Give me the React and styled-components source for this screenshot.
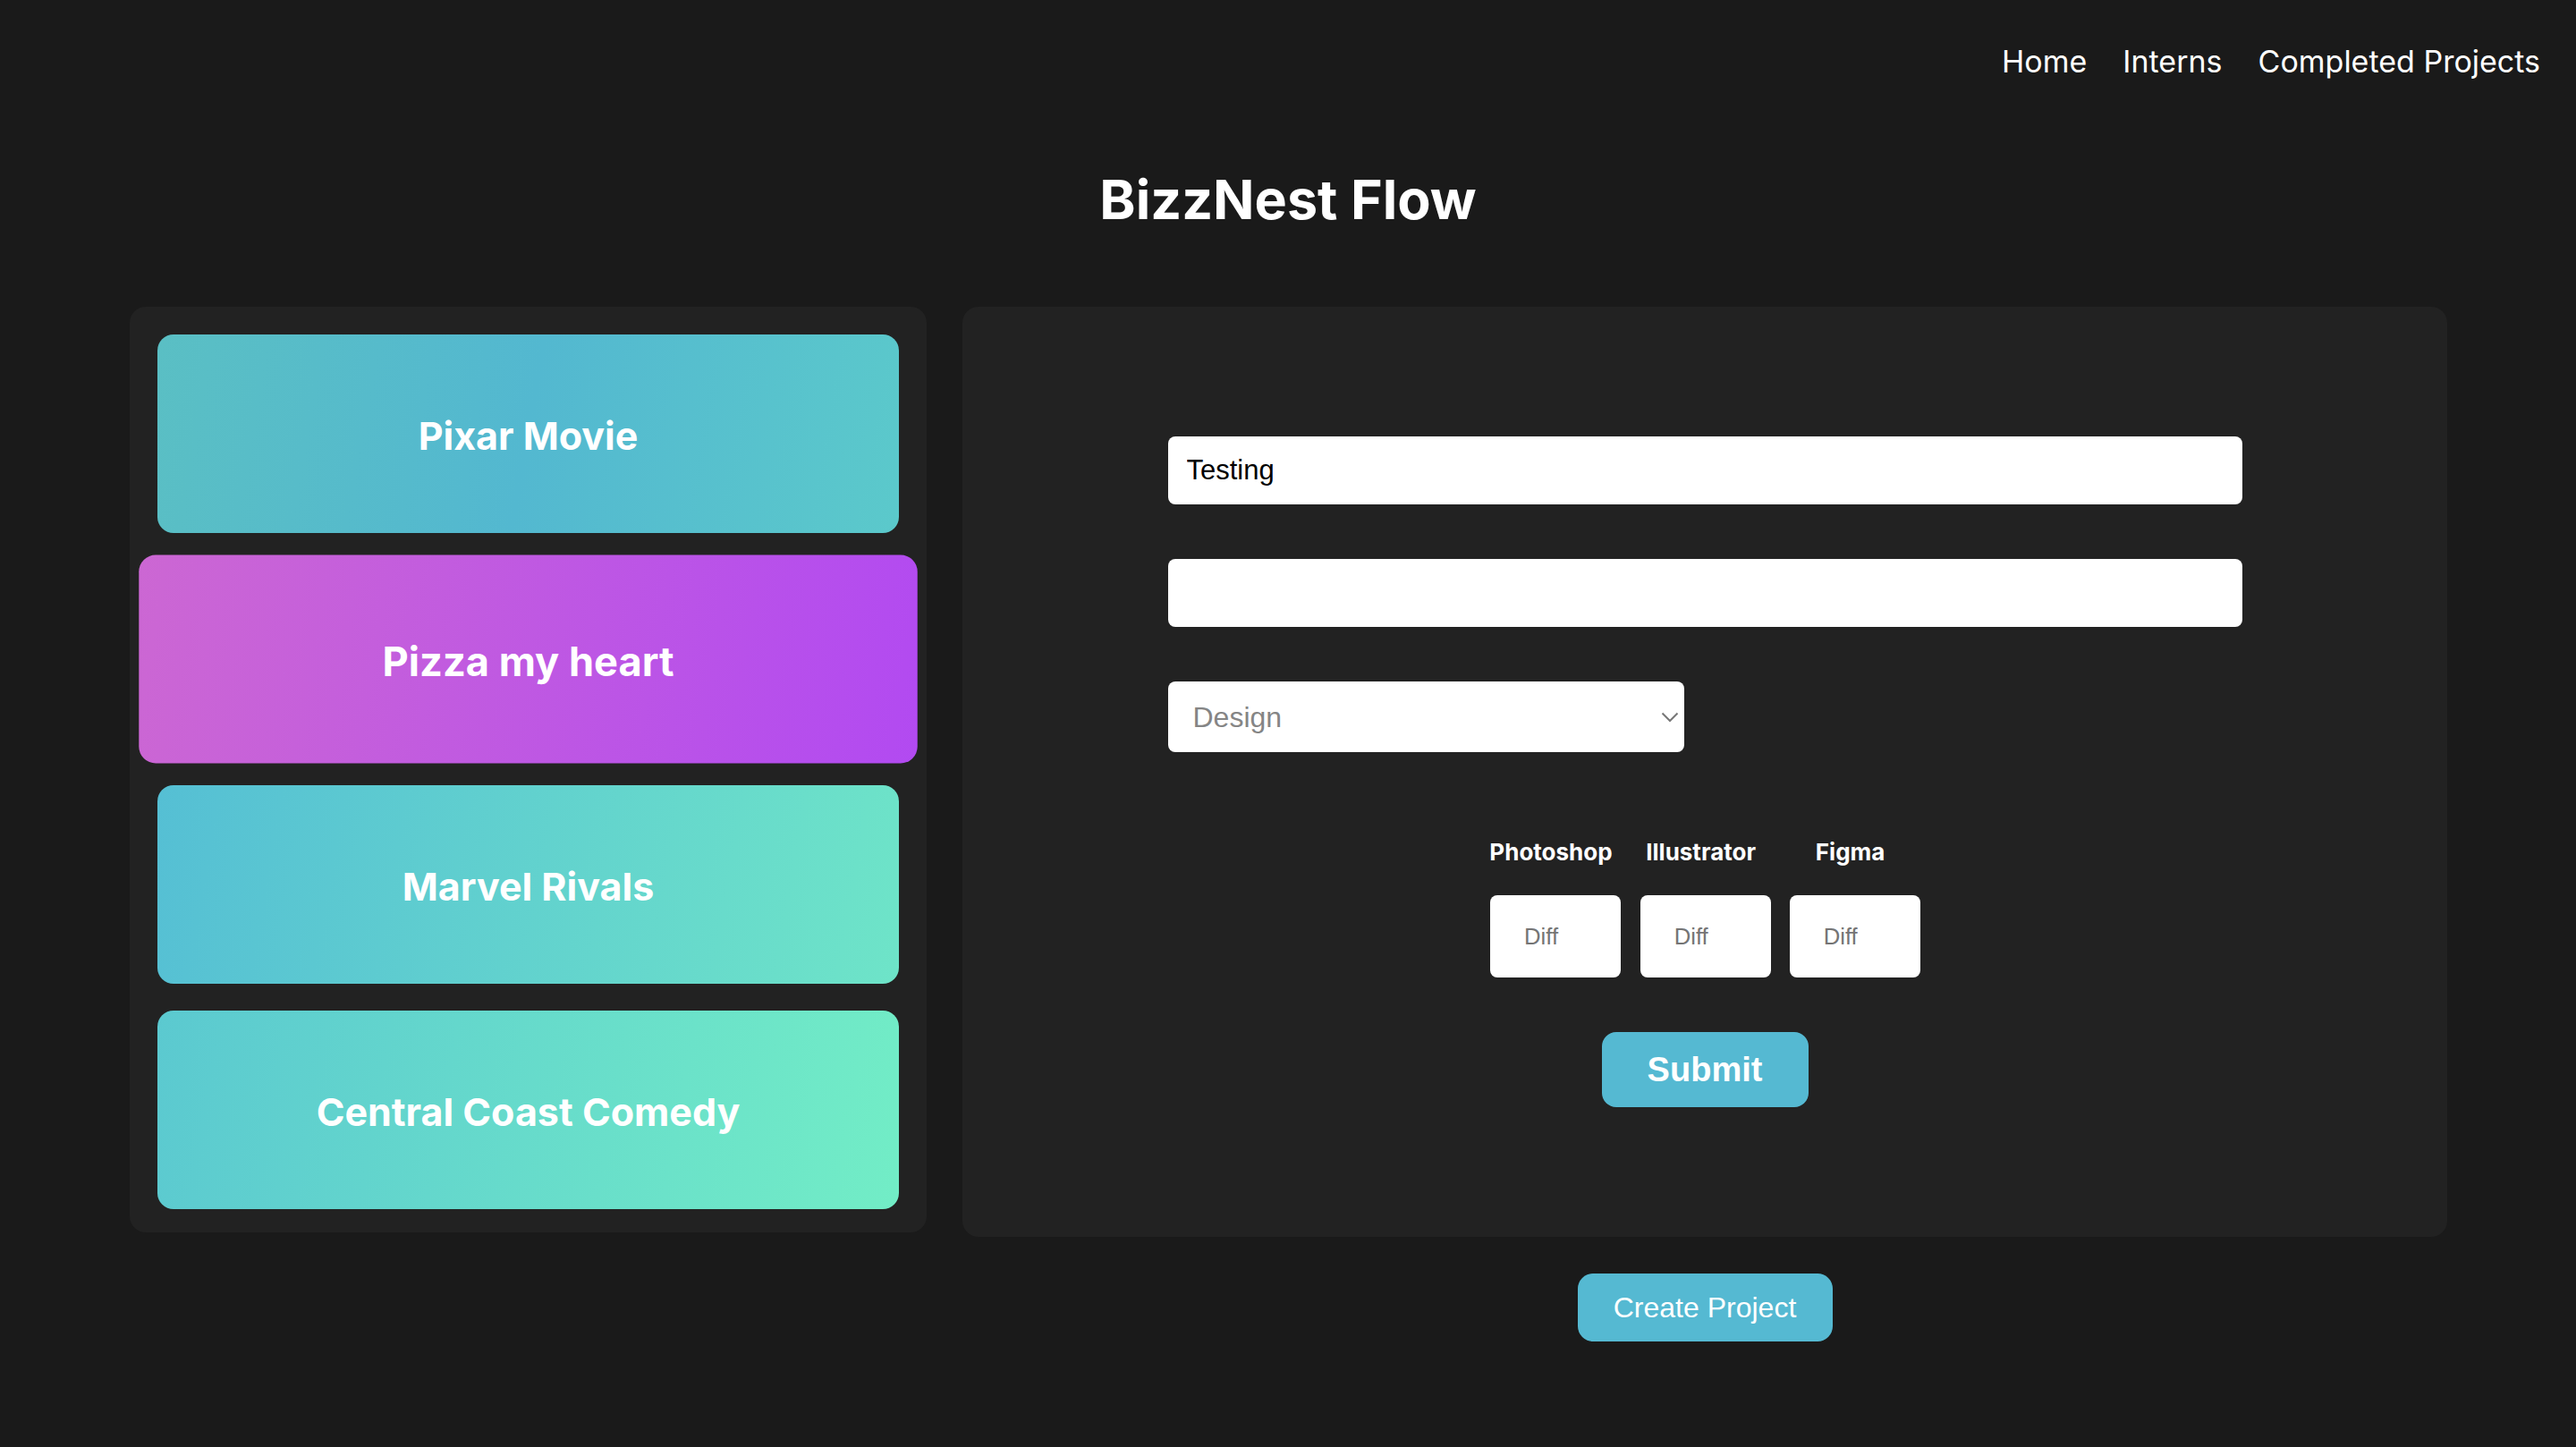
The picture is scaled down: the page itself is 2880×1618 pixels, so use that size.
import React from "react";
import styled, { createGlobalStyle } from "styled-components";

const GlobalStyle = createGlobalStyle`
  html, body {
    margin: 0;
    padding: 0;
    background: #1a1a1a;
  }
  body {
    font-family: Inter, "Noto Sans", sans-serif;
    color: #ffffff;
  }
  * { box-sizing: border-box; }
`;

const Page = styled.div`
  min-height: 1618px;
  background: #1a1a1a;
  display: flex;
  flex-direction: column;
`;

const Nav = styled.nav`
  display: flex;
  justify-content: flex-end;
  gap: 40px;
  padding: 48px 40px 0;
`;

const NavLink = styled.a`
  font-family: Inter, sans-serif;
  font-size: 34px;
  line-height: 41px;
  color: #ffffff;
  text-decoration: none;
`;

const Title = styled.h1`
  margin: 98px 0 83px;
  text-align: center;
  font-family: Inter, sans-serif;
  font-weight: 700;
  font-size: 61px;
  line-height: 73px;
  color: #ffffff;
`;

const Main = styled.main`
  display: grid;
  grid-template-columns: 891px 1fr;
  gap: 40px;
  padding: 0 144px 0 145px;
  align-items: start;
`;

const ProjectList = styled.section`
  background: #222222;
  border-radius: 18px;
  padding: 31px 31px 26px;
  display: flex;
  flex-direction: column;
  gap: 30px;
`;

const ProjectCard = styled.div`
  height: 222px;
  border-radius: 18px;
  display: flex;
  align-items: center;
  justify-content: center;
  padding-top: 3px;
  background: ${(p) => p.$gradient};
  transform: ${(p) => (p.$active ? "scale(1.05)" : "none")};
  font-family: Inter, sans-serif;
  font-weight: 700;
  font-size: 43px;
  color: #ffffff;
  cursor: pointer;
`;

const RightColumn = styled.div`
  display: flex;
  flex-direction: column;
  align-items: center;
  gap: 41px;
`;

const FormPanel = styled.section`
  width: 100%;
  background: #222222;
  border-radius: 18px;
  padding: 145px 0 145px;
  display: flex;
  justify-content: center;
`;

const Form = styled.form`
  width: 1201px;
  display: flex;
  flex-direction: column;
`;

const TextInput = styled.input`
  width: 100%;
  height: 76px;
  border: none;
  border-radius: 8px;
  background: #ffffff;
  padding: 0 21px;
  font-family: "Liberation Sans", Arial, sans-serif;
  font-size: 31px;
  color: #000000;
  outline: none;
  margin-top: ${(p) => p.$gap || 0}px;
`;

const SelectWrap = styled.div`
  position: relative;
  width: 577px;
  height: 79px;
  margin-top: 61px;
`;

const Select = styled.select`
  appearance: none;
  -webkit-appearance: none;
  width: 100%;
  height: 100%;
  border: none;
  border-radius: 8px;
  background: #ffffff;
  padding: 0 40px 0 28px;
  font-family: "Liberation Sans", Arial, sans-serif;
  font-size: 32px;
  color: #858585;
  outline: none;
`;

const Chevron = styled.svg`
  position: absolute;
  right: 6px;
  top: 50%;
  transform: translateY(-50%);
  pointer-events: none;
`;

const SkillRow = styled.div`
  align-self: center;
  display: flex;
  gap: 21px;
  margin-top: 96px;
`;

const SkillColumn = styled.div`
  display: flex;
  flex-direction: column;
  align-items: center;
  gap: 33px;
`;

const SkillLabel = styled.label`
  font-family: Inter, sans-serif;
  font-weight: 700;
  font-size: 26px;
  line-height: 31px;
  margin-right: 10px;
  color: #ffffff;
  white-space: nowrap;
`;

const DiffInput = styled.input`
  width: 146px;
  height: 92px;
  border: none;
  border-radius: 8px;
  background: #ffffff;
  padding: 0 10px 0 38px;
  font-family: "Liberation Sans", Arial, sans-serif;
  font-size: 25.7px;
  color: #000;
  outline: none;
  &::placeholder { color: #757575; }
`;

const SubmitButton = styled.button`
  align-self: center;
  margin-top: 61px;
  width: 231px;
  height: 84px;
  border: none;
  border-radius: 16px;
  background: #55b9d2;
  color: #ffffff;
  font-family: "Liberation Sans", Arial, sans-serif;
  font-weight: 700;
  font-size: 38px;
  cursor: pointer;
`;

const CreateButton = styled.button`
  width: 285px;
  height: 76px;
  border: none;
  border-radius: 17px;
  background: #55b9d2;
  color: #ffffff;
  font-family: "Liberation Sans", Arial, sans-serif;
  font-size: 32px;
  cursor: pointer;
`;

const projects = [
  { name: "Pixar Movie", gradient: "linear-gradient(100deg, #5abfc4 0%, #53b8d0 50%, #5bc9cb 100%)" },
  { name: "Pizza my heart", gradient: "linear-gradient(100deg, #cc67d3 0%, #b24af1 100%)", active: true },
  { name: "Marvel Rivals", gradient: "linear-gradient(100deg, #55bfd4 0%, #6ee4c8 100%)" },
  { name: "Central Coast Comedy", gradient: "linear-gradient(100deg, #5bc9d0 0%, #72edc6 100%)" },
];

const skills = ["Photoshop", "Illustrator", "Figma"];

export default function App() {
  return (
    <>
      <GlobalStyle />
      <Page>
        <Nav>
          <NavLink href="#">Home</NavLink>
          <NavLink href="#">Interns</NavLink>
          <NavLink href="#">Completed Projects</NavLink>
        </Nav>
        <Title>BizzNest Flow</Title>
        <Main>
          <ProjectList>
            {projects.map((p) => (
              <ProjectCard key={p.name} $gradient={p.gradient} $active={p.active}>
                {p.name}
              </ProjectCard>
            ))}
          </ProjectList>
          <RightColumn>
            <FormPanel>
              <Form onSubmit={(e) => e.preventDefault()}>
                <TextInput defaultValue="Testing" />
                <TextInput $gap={61} />
                <SelectWrap>
                  <Select defaultValue="Design">
                    <option value="Design">Design</option>
                    <option value="Development">Development</option>
                    <option value="Marketing">Marketing</option>
                  </Select>
                  <Chevron width="20" height="12" viewBox="0 0 20 12">
                    <path d="M1.5 1.5 L10 10 L18.5 1.5" fill="none" stroke="#777777" strokeWidth="2" />
                  </Chevron>
                </SelectWrap>
                <SkillRow>
                  {skills.map((s) => (
                    <SkillColumn key={s}>
                      <SkillLabel>{s}</SkillLabel>
                      <DiffInput placeholder="Diff" />
                    </SkillColumn>
                  ))}
                </SkillRow>
                <SubmitButton type="submit">Submit</SubmitButton>
              </Form>
            </FormPanel>
            <CreateButton>Create Project</CreateButton>
          </RightColumn>
        </Main>
      </Page>
    </>
  );
}
